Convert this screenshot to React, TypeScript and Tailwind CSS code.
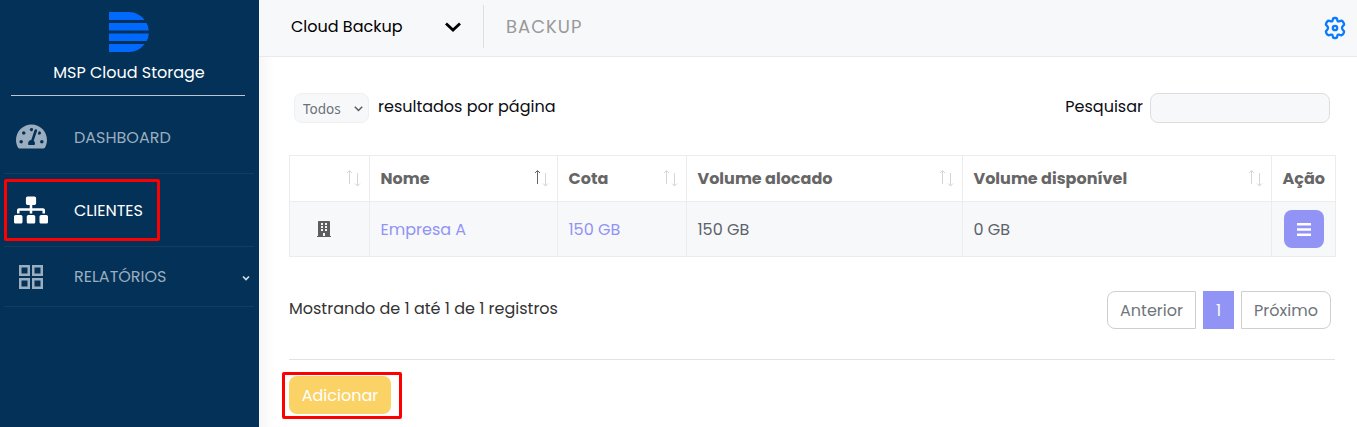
import type { ReactNode } from "react";
import { FaSitemap, FaBuilding, FaTachometerAlt } from "react-icons/fa";
import clsx from "clsx";

interface NavItemProps {
  icon: ReactNode;
  label: string;
  className: string;
  active?: boolean;
  children?: ReactNode;
}

interface HeadCellProps {
  label?: string;
  sortable?: boolean;
  asc?: boolean;
}

const COLS = "grid grid-cols-[80px_188px_129px_276px_309px_65px]";
const CELL = "flex items-center border-l border-[#ececee] pt-0.5 pl-[10.5px]";

function Logo() {
  return (
    <svg viewBox="0 0 40 40" className="h-10 w-10" fill="#006aff">
      <path d="M0 0H20Q30 .3 35.500 8H0zM0 11H37.500Q39.500 14 39.800 18.500H0zM0 21.500H39.800Q39.500 26 37.700 29H0zM0 32H35.500Q29.500 40 20 40H0z" />
    </svg>
  );
}

function GearIcon() {
  return (
    <svg
      viewBox="0 0 24 24"
      className="h-6 w-6"
      fill="none"
      stroke="#0a7bff"
      strokeWidth="2.3"
      strokeLinejoin="round"
    >
      <path d="M9.800 3.600Q9.900 2 11.400 2h1.200Q14.100 2 14.200 3.600Q14.400 6 16.400 5.300Q18.700 4.200 19.700 5.400L20.900 7.400Q21.600 8.700 20.200 9.700Q17.800 12 20.200 14.300Q21.600 15.300 20.900 16.600L19.700 18.600Q18.700 19.800 16.400 18.700Q14.400 18 14.200 20.400Q14.100 22 12.600 22H11.400Q9.900 22 9.800 20.400Q9.600 18 7.600 18.700Q5.300 19.800 4.300 18.600L3.100 16.600Q2.400 15.300 3.800 14.300Q6.200 12 3.800 9.700Q2.400 8.700 3.100 7.400L4.300 5.400Q5.300 4.200 7.600 5.300Q9.600 6 9.800 3.600Z" />
      <circle cx="12" cy="12" r="2.200" />
    </svg>
  );
}

function GridIcon() {
  return (
    <svg viewBox="0 0 24 24" className="h-6 w-6" fill="none" stroke="currentColor" strokeWidth="2.5">
      <path d="M1.250 1.250h8.500v8.500h-8.500zM14.250 1.250h8.500v8.500h-8.500zM1.250 14.250h8.500v8.500h-8.500zM14.250 14.250h8.500v8.500h-8.500z" />
    </svg>
  );
}

function SortIcon({ asc }: { asc?: boolean }) {
  return (
    <svg viewBox="0 0 16 18" className="h-[18px] w-4 shrink-0" fill="none">
      <path d="M4.500 15V2M2 4l2.500-2.500L7 4" stroke={asc ? "#666" : "#d5d5d9"} />
      <path d="M12.500 4v13M10 14.500l2.500 2.500 2.500-2.500" stroke="#d5d5d9" />
    </svg>
  );
}

function NavItem({ icon, label, className, active, children }: NavItemProps) {
  return (
    <div
      className={clsx(
        "flex items-center border-b border-[#153c60]",
        active ? "text-white" : "text-[#9baebf]",
        className,
      )}
    >
      <span className="flex w-[54px] justify-center">{icon}</span>
      <span className="ml-4">{label}</span>
      {children}
    </div>
  );
}

function Sidebar() {
  return (
    <aside className="h-full w-[259px] shrink-0 bg-[#043157]">
      <div className="ml-[11px] flex h-24 w-[234px] flex-col items-center border-b border-[#b8c6d5] pt-3">
        <div className="ml-[2px]">
          <Logo />
        </div>
        <span className="mt-[9px] ml-[2px] text-white">MSP Cloud Storage</span>
      </div>
      <nav className="ml-1 w-[250px]">
        <NavItem className="h-[78px] pt-[6px]" icon={<FaTachometerAlt size={31} className="-mt-0.5" />} label="DASHBOARD" />
        <NavItem className="h-[73px] pt-0.5" active icon={<FaSitemap size={34} className="-mt-0.5" />} label="CLIENTES" />
        <NavItem className="h-[60px]" icon={<GridIcon />} label="RELATÓRIOS">
          <svg viewBox="0 0 8 6" className="mt-0.5 mr-1 ml-auto h-[6px] w-2" fill="none" stroke="#d3dce5" strokeWidth="1.700">
            <path d="M1 1.500l3 3 3-3" />
          </svg>
        </NavItem>
      </nav>
    </aside>
  );
}

function Header() {
  return (
    <header className="flex h-[57px] border-b border-[#e8e9eb] bg-[#f7f8fa]">
      <div className="mt-[5px] flex h-[43px] w-[225px] items-center border-r border-[#dcdee1] pl-8">
        <span className="w-[154px] text-black">Cloud Backup</span>
        <svg viewBox="0 0 16 10" className="mt-px h-[10px] w-4" fill="none" stroke="#000" strokeWidth="2.800">
          <path d="M1 1.500l7 6.500 7-6.500" />
        </svg>
      </div>
      <span className="mt-[15px] ml-[22px] text-[18px] tracking-[1px] text-[#999]">BACKUP</span>
      <div className="mr-[10px] ml-auto mt-4">
        <GearIcon />
      </div>
    </header>
  );
}

function HeadCell({ label, sortable, asc }: HeadCellProps) {
  return (
    <div className="flex items-center border-l border-[#ececee] pl-[10.5px]">
      <span>{label}</span>
      {sortable && (
        <span className="mr-[8px] mb-0.5 ml-auto">
          <SortIcon asc={asc} />
        </span>
      )}
    </div>
  );
}

function ClientsTable() {
  return (
    <div className="mt-8 w-[1047px] border-y border-r border-[#ececee]">
      <div className={clsx(COLS, "h-[46px] border-b border-[#ececee] font-bold text-[#666]")}>
        <HeadCell sortable />
        <HeadCell label="Nome" sortable asc />
        <HeadCell label="Cota" sortable />
        <HeadCell label="Volume alocado" sortable />
        <HeadCell label="Volume disponível" sortable />
        <HeadCell label="Ação" />
      </div>
      <div className={clsx(COLS, "h-[54px] bg-[#f7f8fa] text-[#5b626b]")}>
        <div className="flex items-center border-l border-[#ececee] pl-[26px] text-[#5e5e5e]">
          <FaBuilding size={16} />
        </div>
        <div className={clsx(CELL, "text-[#9193f5]")}>Empresa A</div>
        <div className={clsx(CELL, "text-[#9193f5]")}>150 GB</div>
        <div className={CELL}>150 GB</div>
        <div className={CELL}>0 GB</div>
        <div className="flex items-center border-l border-[#ececee] pl-3">
          <button className="flex h-[38px] w-10 items-center justify-center rounded-lg bg-[#9193f5]">
            <svg viewBox="0 0 14 13" className="h-[13px] w-[14px]" fill="#fff">
              <path d="M0 0h14v2.500H0zM0 5.250h14v2.500H0zM0 10.500h14v2.500H0z" />
            </svg>
          </button>
        </div>
      </div>
    </div>
  );
}

function Pagination() {
  return (
    <div className="mt-[34px] flex h-[38px] w-[1042px]">
      <span className="mt-[6px] text-[#333]">Mostrando de 1 até 1 de 1 registros</span>
      <div className="ml-auto flex text-[#6f757b]">
        <button className="w-[89px] rounded-l-lg border border-[#cfcfd1] pt-0.5">Anterior</button>
        <button className="mx-[7px] w-[31px] bg-[#9193f5] pt-0.5 text-white">1</button>
        <button className="w-[90px] rounded-r-lg border border-[#cfcfd1] pt-0.5">Próximo</button>
      </div>
    </div>
  );
}

export default function App() {
  return (
    <div className="relative flex h-[427px] w-[1357px] overflow-hidden bg-white font-[Poppins,Inter,sans-serif] text-[16px] leading-6 text-[#0c0c14]">
      <Sidebar />
      <main className="flex flex-1 flex-col">
        <Header />
        <div className="flex-1 bg-[linear-gradient(to_right,#f6f6f6,#fff_15px)] pt-9 pl-[30px]">
          <div className="flex h-[30px] w-[1041px] items-center">
            <div className="ml-[5px] flex h-[30px] w-[75px] items-center rounded-lg border border-[#eeeff1] bg-[#f7f8fa] pl-2 font-['Noto_Sans',sans-serif] text-[13.500px] text-[#6a7078]">
              <span className="pt-0.5">Todos</span>
              <svg viewBox="0 0 9 6" className="mt-0.5 mr-[5px] ml-auto h-[6px] w-[9px]" fill="none" stroke="#555b62" strokeWidth="1.500">
                <path d="M.8.800l3.700 3.700L8.200.800" />
              </svg>
            </div>
            <span className="-mt-0.5 ml-[9px]">resultados por página</span>
            <span className="-mt-0.5 mr-[7px] ml-auto">Pesquisar</span>
            <input className="h-[30px] w-[180px] rounded-lg border border-[#dcdde0] bg-[#f7f8fa]" />
          </div>
          <ClientsTable />
          <Pagination />
          <hr className="mt-[30px] w-[1046px] border-[#e3e3e5]" />
          <button className="mt-4 h-[38px] w-[102px] rounded-lg bg-[#fad266] pt-0.5 text-white">Adicionar</button>
        </div>
      </main>

      {/* highlight frames */}
      <div className="absolute top-[179px] left-[4px] h-[62px] w-[156px] rounded-[2px] border-3 border-[#ff0000]" />
      <div className="absolute top-[372px] left-[282px] h-[47px] w-[120px] rounded-[2px] border-3 border-[#ff0000]" />
    </div>
  );
}
